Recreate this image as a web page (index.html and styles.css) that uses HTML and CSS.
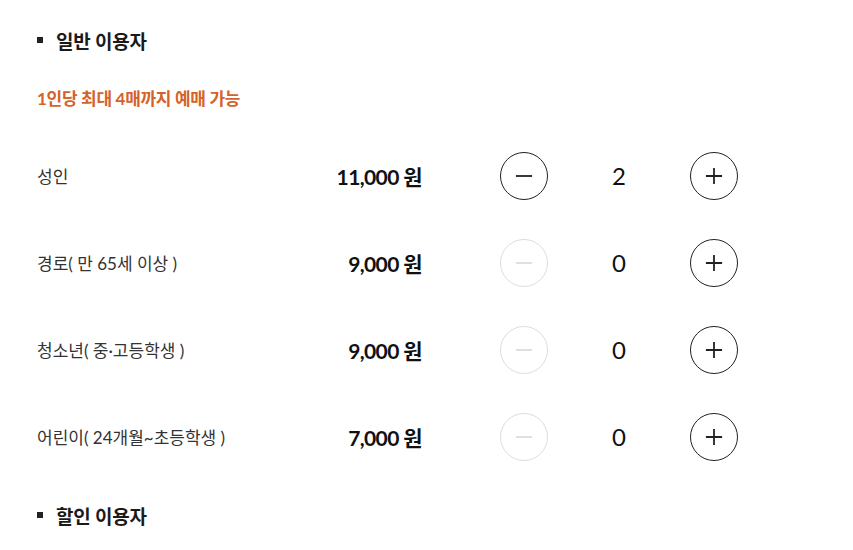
FILE: index.html
```html
<!DOCTYPE html>
<html lang="ko">
<head>
<meta charset="utf-8">
<link rel="stylesheet" href="styles.css">
</head>
<body>
<div class="wrap">
  <h3 class="section-title"><span class="bullet"></span>일반 이용자</h3>
  <p class="notice">1인당 최대 4매까지 예매 가능</p>
  <div class="rows">
    <div class="row">
      <span class="label">성인</span>
      <span class="price">11,000 원</span>
      <div class="stepper">
        <button class="btn"><svg viewBox="0 0 20 20"><path d="M1 10h18"/></svg></button>
        <span class="count">2</span>
        <button class="btn"><svg viewBox="0 0 20 20"><path d="M1 10h18M10 1v18"/></svg></button>
      </div>
    </div>
    <div class="row">
      <span class="label">경로( 만 65세 이상 )</span>
      <span class="price">9,000 원</span>
      <div class="stepper">
        <button class="btn disabled"><svg viewBox="0 0 20 20"><path d="M1 10h18"/></svg></button>
        <span class="count">0</span>
        <button class="btn"><svg viewBox="0 0 20 20"><path d="M1 10h18M10 1v18"/></svg></button>
      </div>
    </div>
    <div class="row">
      <span class="label">청소년( 중·고등학생 )</span>
      <span class="price">9,000 원</span>
      <div class="stepper">
        <button class="btn disabled"><svg viewBox="0 0 20 20"><path d="M1 10h18"/></svg></button>
        <span class="count">0</span>
        <button class="btn"><svg viewBox="0 0 20 20"><path d="M1 10h18M10 1v18"/></svg></button>
      </div>
    </div>
    <div class="row">
      <span class="label">어린이( 24개월~초등학생 )</span>
      <span class="price">7,000 원</span>
      <div class="stepper">
        <button class="btn disabled"><svg viewBox="0 0 20 20"><path d="M1 10h18"/></svg></button>
        <span class="count">0</span>
        <button class="btn"><svg viewBox="0 0 20 20"><path d="M1 10h18M10 1v18"/></svg></button>
      </div>
    </div>
  </div>
  <h3 class="section-title bottom"><span class="bullet"></span>할인 이용자</h3>
</div>
</body>
</html>
```
FILE: styles.css
```css
* { box-sizing: border-box; }
html, body { margin: 0; padding: 0; background: #fff; }
body {
  font-family: Lato, "Noto Sans CJK KR", sans-serif;
  color: #222;
}
.wrap {
  padding: 27px 0 0 37px;
}
.section-title {
  display: flex;
  align-items: center;
  margin: 0;
  height: 26px;
  font-size: 19px;
  font-weight: 700;
  color: #1a1a1a;
  letter-spacing: -0.2px;
}
.bullet {
  width: 6px;
  height: 6px;
  background: #222;
  margin-right: 13px;
}
.notice {
  margin: 35px 0 0;
  height: 22px;
  line-height: 22px;
  font-size: 17px;
  font-weight: 700;
  color: #d5622b;
  letter-spacing: -0.3px;
}
.rows {
  margin-top: 22px;
}
.row {
  display: grid;
  grid-template-columns: 300px 85px 78px auto;
  align-items: center;
  height: 87px;
}
.label {
  font-size: 17px;
  font-weight: 400;
  color: #333;
  white-space: nowrap;
}
.price {
  grid-column: 2;
  justify-self: end;
  font-size: 21px;
  font-weight: 700;
  color: #111;
  white-space: nowrap;
  letter-spacing: -0.6px;
}
.stepper {
  grid-column: 4;
  display: grid;
  grid-template-columns: 48px 142px 48px;
  align-items: center;
}
.btn {
  width: 48px;
  height: 48px;
  border-radius: 50%;
  border: 1px solid #222;
  background: #fff;
  padding: 0;
  display: flex;
  align-items: center;
  justify-content: center;
}
.btn svg {
  width: 18px;
  height: 18px;
  fill: none;
  stroke: #222;
  stroke-width: 2;
}
.btn.disabled { border-color: #ddd; }
.btn.disabled svg { stroke: #ddd; }
.count {
  text-align: center;
  font-size: 24px;
  color: #111;
}
.section-title.bottom {
  margin-top: 22px;
}
```
